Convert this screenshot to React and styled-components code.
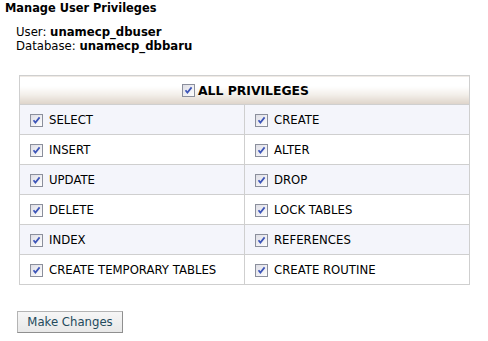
import styled, { createGlobalStyle } from "styled-components"

const GlobalStyle = createGlobalStyle`
  body {
    margin: 0;
    background: #ffffff;
    font-family: "DejaVu Sans", Verdana, sans-serif;
    color: #000000;
  }
`

const privileges = [
  ["SELECT", "CREATE"],
  ["INSERT", "ALTER"],
  ["UPDATE", "DROP"],
  ["DELETE", "LOCK TABLES"],
  ["INDEX", "REFERENCES"],
  ["CREATE TEMPORARY TABLES", "CREATE ROUTINE"],
]

// little checked box, drawn like the old XP style one
const CheckIcon = () => (
  <svg width="13" height="13" viewBox="0 0 13 13">
    <defs>
      <linearGradient id="cbg" x1="0" y1="0" x2="1" y2="1">
        <stop offset="0" stopColor="#dcdce4" />
        <stop offset="1" stopColor="#ffffff" />
      </linearGradient>
    </defs>
    <rect x="0.5" y="0.5" width="12" height="12" fill="url(#cbg)" stroke="#8b8f9c" />
    <path d="M3.5 6.2 L5.4 8.6 L9.6 3.4" fill="none" stroke="#3c54b8" strokeWidth="1.7" />
  </svg>
)

const App = () => {
  return (
    <Page>
      <GlobalStyle />
      <Title>Manage User Privileges</Title>
      <Info>
        <div>User: <b>unamecp_dbuser</b></div>
        <div>Database: <b>unamecp_dbbaru</b></div>
      </Info>

      <Table>
        <thead>
          <tr>
            <HeadCell colSpan={2}>
              <HeadLabel>
                <CheckIcon />
                ALL PRIVILEGES
              </HeadLabel>
            </HeadCell>
          </tr>
        </thead>
        <tbody>
          {privileges.map((row, i) => (
            <Row key={i} $shaded={i % 2 === 0}>
              {row.map((name) => (
                <Cell key={name}>
                  <Label>
                    <CheckIcon />
                    <span>{name}</span>
                  </Label>
                </Cell>
              ))}
            </Row>
          ))}
        </tbody>
      </Table>

      <Button>Make Changes</Button>
    </Page>
  )
}

export default App

const Page = styled.div`
  width: 488px;
  height: 341px;
  padding: 1px 0 0 5px;
  box-sizing: border-box;
`

const Title = styled.div`
  font-weight: bold;
  font-size: 11.4px;
  line-height: 14px;
`

const Info = styled.div`
  margin: 10px 0 0 11px;
  font-size: 11.7px;
  line-height: 14px;

  b {
    font-weight: bold;
  }
`

const Table = styled.table`
  margin: 22px 0 0 14px;
  width: 451px;
  border-collapse: collapse;
  border: 1px solid #cfcfcf;
  font-size: 11.7px;
`

const HeadCell = styled.th`
  height: 28px;
  padding: 0;
  text-align: center;
  background: linear-gradient(to bottom, #ffffff 0%, #ffffff 35%, #f3efea 65%, #ddd3c9 100%);
  border-bottom: 1px solid #cfcfcf;
`

const HeadLabel = styled.span`
  display: inline-flex;
  align-items: center;
  gap: 3px;
  font-size: 12.4px;
  font-weight: bold;
  margin-left: 2px;
  padding-top: 2px;
`

const Row = styled.tr`
  background: ${({ $shaded }) => ($shaded ? "#f4f5fb" : "#ffffff")};
`

const Cell = styled.td`
  width: 50%;
  height: 29px;
  padding: 0 0 0 10px;
  border: 1px solid #cfcfcf;
`

const Label = styled.label`
  display: flex;
  align-items: center;
  gap: 6px;
  padding-top: 1px;
`

const Button = styled.button`
  display: block;
  margin: 26px 0 0 12px;
  width: 106px;
  height: 22px;
  padding: 0;
  font-family: "DejaVu Sans", Verdana, sans-serif;
  font-size: 11.7px;
  color: #234a5c;
  background: linear-gradient(to bottom, #f6f6f6, #e8e8e8);
  border: 1px solid #b4b4b4;
  border-right-color: #8f8f8f;
  border-bottom-color: #8f8f8f;
`
